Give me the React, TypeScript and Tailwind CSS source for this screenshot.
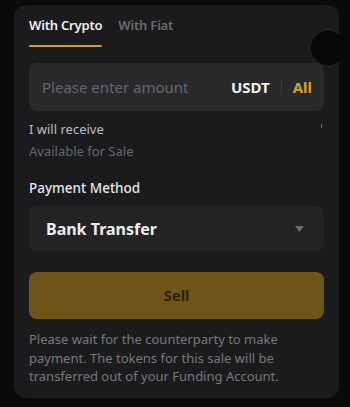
import { useState } from 'react';

export default function App() {
  const [tab, setTab] = useState<'crypto' | 'fiat'>('crypto');

  return (
    <div
      className="w-[350px] h-[407px] bg-[#0a0a0b] pt-[5px] pl-[14px] relative overflow-hidden"
      style={{ fontFamily: '"Noto Sans", "Open Sans", sans-serif' }}
    >
      <div className="relative w-[325px] h-[393px] rounded-[12px] bg-[#1b1b1d] px-[15px] pt-[10px]">
        {/* Tabs */}
        <div className="flex items-start gap-[16px] h-[36px]">
          <button
            onClick={() => setTab('crypto')}
            className={`relative text-[13px] tracking-[-0.2px] font-semibold leading-[20px] ${tab === 'crypto' ? 'text-[#f0f0f0]' : 'text-[#6c6c70]'}`}
          >
            With Crypto
            {tab === 'crypto' && (
              <span className="absolute left-0 right-0 top-[30px] h-[2px] rounded-full bg-[#c99a3c]" />
            )}
          </button>
          <button
            onClick={() => setTab('fiat')}
            className={`relative text-[13px] tracking-[-0.2px] font-semibold leading-[20px] ${tab === 'fiat' ? 'text-[#f0f0f0]' : 'text-[#6c6c70]'}`}
          >
            With Fiat
            {tab === 'fiat' && (
              <span className="absolute left-0 right-0 top-[30px] h-[2px] rounded-full bg-[#c99a3c]" />
            )}
          </button>
        </div>

        {/* Amount */}
        <div className="mt-[12px] h-[48px] rounded-[8px] bg-[#29292c] flex items-center pl-[13px] pr-[12px]">
          <span className="flex-1 text-[15px] text-[#66666a]">Please enter amount</span>
          <span className="text-[15px] font-bold text-[#f0f0f0]">USDT</span>
          <span className="mx-[11px] w-px h-[14px] bg-[#3a3a3d]" />
          <span className="text-[15px] font-bold text-[#d6a230]">All</span>
        </div>

        <div className="mt-[9px] text-[13px] leading-[18px] text-[#bdbdc0]">I will receive</div>
        <div className="mt-[4px] text-[13px] leading-[18px] text-[#66666a]">Available for Sale</div>
        <span className="absolute left-[307px] top-[119px] w-px h-[4px] bg-[#6c6c70]" />

        <div className="mt-[19px] text-[13.5px] font-medium leading-[18px] text-[#e6e6e8]">Payment Method</div>

        {/* Payment dropdown */}
        <div className="mt-[9px] h-[45px] rounded-[8px] bg-[#232326] flex items-center pl-[17px] pr-[20px]">
          <span className="flex-1 text-[16px] font-bold text-[#ececee]">Bank Transfer</span>
          <svg width="9" height="6" viewBox="0 0 9 6">
            <path d="M0 0h9L4.5 6z" fill="#6c6c70" />
          </svg>
        </div>

        {/* Sell */}
        <button className="mt-[21px] w-full h-[47px] rounded-[8px] bg-[#6e5418] text-[15px] font-bold text-[#2e230d]">
          Sell
        </button>

        <p className="mt-[11px] text-[13px] leading-[18.5px] text-[#77777b]">
          Please wait for the counterparty to make payment. The tokens for this sale will be transferred out of your Funding Account.
        </p>
      </div>

      {/* overlay circle at right edge */}
      <div className="absolute left-[311px] top-[31px] w-[34px] h-[34px] rounded-full bg-[#070708]" />
    </div>
  );
}
